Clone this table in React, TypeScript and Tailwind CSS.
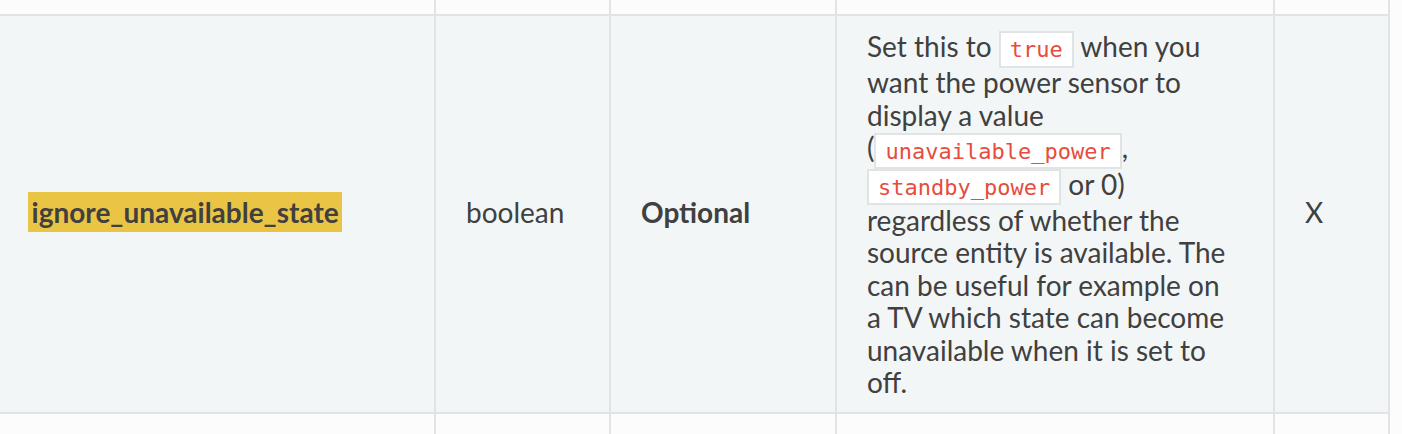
import type { ReactNode } from "react";

// column widths include the 2px right border of each cell
const columns = "grid grid-cols-[436px_175px_226px_438px_115px] w-[1390px]";

const Code = ({ children }: { children: ReactNode }) => (
  <code className="whitespace-nowrap border-2 border-[#e1e4e5] bg-white px-[9px] py-[3.6px] font-['DejaVu_Sans_Mono',monospace] text-[22px] text-[#e74c3c]">
    {children}
  </code>
);

const Cell = ({ children, className = "" }: { children?: ReactNode; className?: string }) => (
  <div className={`flex items-center border-r-2 border-[#e1e4e5] px-[30px] ${className}`}>{children}</div>
);

const EmptyRow = ({ height }: { height: string }) => (
  <div className={`${columns} ${height}`}>
    {[0, 1, 2, 3, 4].map((i) => (
      <div key={i} className="border-r-2 border-[#e1e4e5]" />
    ))}
  </div>
);

const App = () => {
  return (
    <div className="h-[434px] w-full overflow-hidden bg-[#fcfcfc] font-['Lato','Liberation_Sans',sans-serif] text-[28px] leading-[32.4px] text-[#404040]">
      <EmptyRow height="h-[14px]" />

      <div className={`${columns} border-y-2 border-[#e1e4e5] bg-[#f3f6f6]`}>
        <Cell className="pl-[28px] pb-[4px]">
          <span className="bg-[#eac545] px-[3.6px] py-[4px] font-bold">ignore_unavailable_state</span>
        </Cell>
        <Cell className="pb-[4px]">boolean</Cell>
        <Cell className="pb-[4px]">
          <strong className="font-bold">Optional</strong>
        </Cell>
        <Cell className="pt-[14px] pb-[14px] pr-[38px]">
          <p>
            Set this to <Code>true</Code> when you want the power sensor to display a value (
            <Code>unavailable_power</Code>, <Code>standby_power</Code> or 0) regardless of whether the source entity
            is available. The can be useful for example on a TV which state can become unavailable when it is set to
            off.
          </p>
        </Cell>
        <Cell className="pb-[4px]">X</Cell>
      </div>

      <EmptyRow height="h-[20px]" />
    </div>
  );
};

export default App;
